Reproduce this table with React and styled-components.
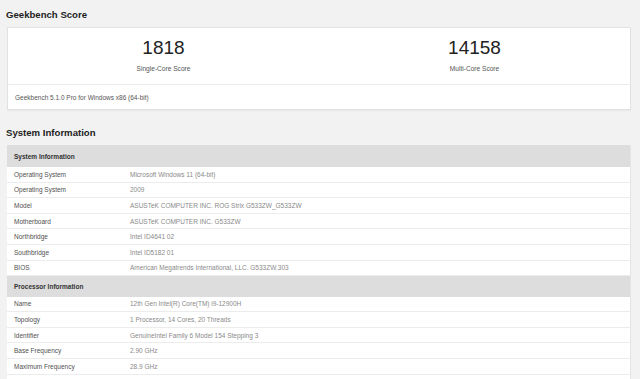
import styled, { createGlobalStyle } from "styled-components";

const GlobalStyle = createGlobalStyle`
  body {
    margin: 0;
    background: #f2f2f2;
    font-family: "Liberation Sans", Arial, sans-serif;
  }
`;

const scores = [
  { value: "1818", label: "Single-Core Score" },
  { value: "14158", label: "Multi-Core Score" },
];

const sections = [
  {
    title: "System Information",
    rows: [
      ["Operating System", "Microsoft Windows 11 (64-bit)"],
      ["Operating System", "2009"],
      ["Model", "ASUSTeK COMPUTER INC. ROG Strix G533ZW_G533ZW"],
      ["Motherboard", "ASUSTeK COMPUTER INC. G533ZW"],
      ["Northbridge", "Intel ID4641 02"],
      ["Southbridge", "Intel ID5182 01"],
      ["BIOS", "American Megatrends International, LLC. G533ZW.303"],
    ],
  },
  {
    title: "Processor Information",
    rows: [
      ["Name", "12th Gen Intel(R) Core(TM) i9-12900H"],
      ["Topology", "1 Processor, 14 Cores, 20 Threads"],
      ["Identifier", "GenuineIntel Family 6 Model 154 Stepping 3"],
      ["Base Frequency", "2.90 GHz"],
      ["Maximum Frequency", "28.9 GHz"],
    ],
  },
];

export default function App() {
  return (
    <Page>
      <GlobalStyle />
      <Title>Geekbench Score</Title>
      <Card>
        <ScoreRow>
          {scores.map((s) => (
            <Score key={s.label}>
              <ScoreValue>{s.value}</ScoreValue>
              <ScoreLabel>{s.label}</ScoreLabel>
            </Score>
          ))}
        </ScoreRow>
        <CardFooter>Geekbench 5.1.0 Pro for Windows x86 (64-bit)</CardFooter>
      </Card>

      <Title $top={16}>System Information</Title>
      <Table>
        {sections.map((sec, i) => (
          <div key={sec.title}>
            <SectionHead $tall={i === 0}>{sec.title}</SectionHead>
            {sec.rows.map(([k, v], j) => (
              <Row key={j}>
                <Key>{k}</Key>
                <Value>{v}</Value>
              </Row>
            ))}
          </div>
        ))}
        <Row />
      </Table>
    </Page>
  );
}

const Page = styled.div`
  padding: 0 9px 0 7px;
  height: 379px;
  overflow: hidden;
`;

const Title = styled.h2`
  margin: ${(p) => p.$top || 8}px 0 5px -1px;
  font-size: 9.6px;
  line-height: 14px;
  font-weight: 700;
  color: #222;
`;

const Card = styled.div`
  background: #fff;
  border: 1px solid #e2e2e2;
  box-shadow: 0 1px 1px rgba(0, 0, 0, 0.04);
`;

const ScoreRow = styled.div`
  display: grid;
  grid-template-columns: 1fr 1fr;
  height: 56px;
  border-bottom: 1px solid #ececec;
`;

const Score = styled.div`
  display: flex;
  flex-direction: column;
  align-items: center;
  padding-top: 9px;
`;

const ScoreValue = styled.div`
  font-size: 19px;
  line-height: 22px;
  color: #222;
`;

const ScoreLabel = styled.div`
  margin-top: 5px;
  font-size: 6.6px;
  line-height: 10px;
  color: #555;
`;

const CardFooter = styled.div`
  height: 24px;
  display: flex;
  align-items: center;
  padding-left: 7px;
  font-size: 6.5px;
  color: #555;
`;

const Table = styled.div`
  background: #fff;
  border-right: 1px solid #e4e4e4;
`;

const SectionHead = styled.div`
  height: ${(p) => (p.$tall ? 22 : 20.5)}px;
  display: flex;
  align-items: center;
  padding-left: 7px;
  background: #dddddd;
  font-size: 6.5px;
  font-weight: 700;
  color: #333;
`;

const Row = styled.div`
  display: grid;
  grid-template-columns: 116px 1fr;
  align-items: center;
  height: 14.6px;
  padding-left: 7px;
  border-bottom: 1px solid #ececec;
  font-size: 6.5px;
`;

const Key = styled.div`
  color: #505050;
`;

const Value = styled.div`
  color: #8a8a8a;
`;
